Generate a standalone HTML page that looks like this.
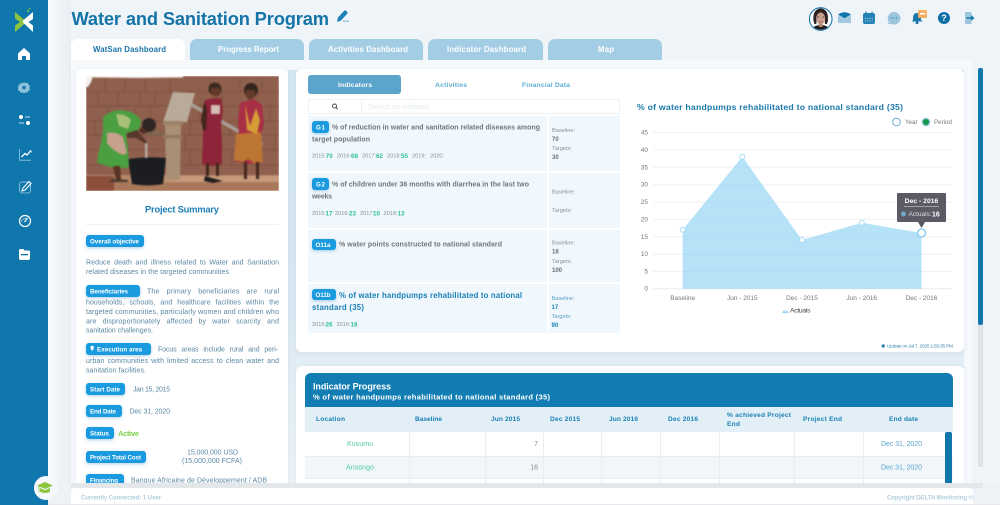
<!DOCTYPE html>
<html lang="en"><head><meta charset="utf-8"><title>Water and Sanitation Program</title>
<style>
html,body{margin:0;padding:0;width:1000px;height:505px;overflow:hidden;background:#eff4f9;font-family:"Liberation Sans",sans-serif}
.b{position:absolute}
svg{position:absolute;left:0;top:0}
text{font-family:"Liberation Sans",sans-serif}
.tab{position:absolute;top:39px;height:21px;background:#a3cde4;border-radius:7px 7px 0 0}
.card{position:absolute;background:#fff;border-radius:6px;box-shadow:0 1px 6px rgba(90,130,160,.12)}
.row{position:absolute;background:#f0f8fd}
.pill{position:absolute;background:#1a9be0;border-radius:3px;box-shadow:0 1px 3px rgba(30,120,180,.35)}
.c{position:absolute;top:432px;height:51px;width:1px;background:#e8edf1}
</style></head><body>
<div class="b" style="left:48px;top:0;width:23px;height:505px;background:linear-gradient(90deg,#f7fafc,#e9eef3)"></div>
<div class="b" style="left:0;top:0;width:48px;height:505px;background:#1077ad"></div>
<div class="b" style="left:71px;top:60px;width:901px;height:423px;background:#f6f9fc"></div>
<div class="b" style="left:288px;top:70px;width:684px;height:413px;background:linear-gradient(180deg,#d6e7f1 0%,#d9e9f3 55%,#e3eef5 72%,#eef5f9 100%)"></div>
<div class="b" style="left:964px;top:60px;width:8px;height:423px;background:#f6f9fc"></div>
<div class="b" style="left:978px;top:68px;width:5px;height:399px;background:#dfe3e7"></div>
<div class="b" style="left:978px;top:68px;width:5px;height:257px;background:#1077ad;border-radius:2px"></div>

<div class="tab" style="left:71px;width:114px;background:#fff"></div>
<div class="tab" style="left:190px;width:114px"></div>
<div class="tab" style="left:309px;width:114px"></div>
<div class="tab" style="left:428px;width:115px"></div>
<div class="tab" style="left:548px;width:114px"></div>

<div class="card" style="left:76px;top:69px;width:212px;height:425px"></div>
<div class="card" style="left:296px;top:69px;width:668px;height:283px"></div>
<div class="card" style="left:296px;top:366px;width:668px;height:128px"></div>

<div class="b" style="left:86px;top:224px;width:193px;height:1px;background:#eef2f6"></div>
<div class="pill" style="left:86px;top:235px;width:58px;height:12px"></div>
<div class="pill" style="left:86px;top:285px;width:54px;height:12px"></div>
<div class="pill" style="left:86px;top:343px;width:65px;height:12px"></div>
<div class="pill" style="left:86px;top:383px;width:39px;height:12px"></div>
<div class="pill" style="left:86px;top:405px;width:36px;height:12px"></div>
<div class="pill" style="left:86px;top:427px;width:28px;height:12px"></div>
<div class="pill" style="left:86px;top:451px;width:60px;height:12px"></div>
<div class="pill" style="left:86px;top:474px;width:38px;height:12px"></div>

<div class="b" style="left:308px;top:75px;width:93px;height:19px;background:#5ba4cb;border-radius:3px"></div>
<div class="b" style="left:308px;top:99px;width:312px;height:15px;box-sizing:border-box;border:1px solid #eaf1f7"></div>
<div class="b" style="left:361px;top:99px;width:1px;height:15px;background:#eaf1f7"></div>
<div class="row" style="left:308px;top:116px;width:239px;height:55px"></div>
<div class="row" style="left:549px;top:116px;width:71px;height:55px"></div>
<div class="row" style="left:308px;top:173px;width:239px;height:55px"></div>
<div class="row" style="left:549px;top:173px;width:71px;height:55px"></div>
<div class="row" style="left:308px;top:230px;width:239px;height:52px"></div>
<div class="row" style="left:549px;top:230px;width:71px;height:52px"></div>
<div class="row" style="left:308px;top:284px;width:239px;height:49px"></div>
<div class="row" style="left:549px;top:284px;width:71px;height:49px"></div>
<div class="pill" style="left:312px;top:121px;width:17px;height:12px"></div>
<div class="pill" style="left:312px;top:178px;width:17px;height:12px"></div>
<div class="pill" style="left:312px;top:239px;width:24px;height:11px"></div>
<div class="pill" style="left:312px;top:289px;width:24px;height:11px"></div>

<div class="b" style="left:305px;top:373px;width:648px;height:34px;background:#127db3;border-radius:6px 6px 0 0"></div>
<div class="b" style="left:305px;top:407px;width:648px;height:25px;background:#e3eff7"></div>
<div class="b" style="left:305px;top:432px;width:648px;height:24px;background:#fff"></div>
<div class="b" style="left:305px;top:456px;width:648px;height:23px;background:#f1f6fb;border-top:1px solid #e8edf1;border-bottom:1px solid #e8edf1;box-sizing:border-box"></div>
<div class="c" style="left:409px"></div><div class="c" style="left:485px"></div><div class="c" style="left:543px"></div><div class="c" style="left:601px"></div><div class="c" style="left:660px"></div><div class="c" style="left:719px"></div><div class="c" style="left:794px"></div><div class="c" style="left:863px"></div>
<div class="b" style="left:945px;top:432px;width:7px;height:51px;background:#1077ad;border-radius:2px 2px 0 0"></div>

<svg width="1000" height="505" viewBox="0 0 1000 505">
<!-- photo -->
<svg x="86" y="76" width="193" height="115" viewBox="86 76 193 115">
<g style="filter:blur(.7px)">
<rect x="86" y="76" width="193" height="115" fill="#90604e"/>
<path d="M86 76h7l-2 6-3 5h-2zM93 76h90v1.500l-45 .5-45-.5z" fill="#f4f1ee"/>
<g stroke="#764636" stroke-width="1" opacity=".6"><path d="M86 92h193M86 106h193M86 121h193M86 135h193M86 150h193M86 165h193"/><path d="M105 78v14M125 78v14M145 78v14M170 78v14M210 78v14M240 78v14M262 78v14M98 92v14M118 92v14M140 92v14M155 92v14M222 92v14M258 92v14M108 106v15M135 106v15M150 106v15M200 106v15M270 106v15M95 121v14M120 121v14M190 121v14M230 121v14M260 121v14M185 135v15M205 135v15M275 135v15M190 150v15M232 150v15"/></g>
<rect x="86" y="175" width="193" height="16" fill="#b58767"/>
<path d="M86 176h28l2 15H86z" fill="#8b4f3a"/>
<path d="M114 182h165v9H114z" fill="#a9785b"/>
<path d="M165 176h114v6H165z" fill="#c69a7b"/>
<path d="M163 122l10-30 22 1-8 29z" fill="#b9ab9a"/>
<path d="M165 122h16l-1 58h-14z" fill="#a98f73"/><rect x="163" y="121" width="20" height="4" fill="#9b8268"/><rect x="163" y="135" width="20" height="3" fill="#917860"/>
<rect x="146" y="132" width="18" height="3" fill="#7b6653"/>
<path d="M192 103l71 40-1 3-72-40z" fill="#a89f96"/>
<path d="M128 159q19-3 38-1l-3 26q-16 3-31 0z" fill="#1b1d20"/>
<path d="M103 117q8-7 18-7 13 1 20 10l-1 8-8 7-6-1 2 16 1 16-2 2-13 0-17-5q1-10 4-20l2-12z" fill="#4a9f40"/>
<path d="M107 133q9-2 16 4l4 16-4 2q-10-4-16-12z" fill="#c8a08e"/>
<path d="M116 114q10 0 15 6l-3 9-9-3z" fill="#a9bf7a"/>
<path d="M127 133l10-3 10 12-1 2-10-6-9 0z" fill="#56372a"/>
<path d="M113 166h7l1 14-5 0z" fill="#5a3324"/><path d="M110 182h18l0-2-16-1z" fill="#4a3a32"/>
<circle cx="149" cy="125" r="7" fill="#2f2624"/><path d="M141 127l8 5-6 2-4-3z" fill="#4e2d22"/>
<rect x="145" y="143" width="2.500" height="15" fill="#cfd5d8" opacity=".6"/>
<path d="M205 100q6-2 16-2l2 12-2 14 1 20 0 20-10 2-10-2 1-30-1-18z" fill="#8d2439"/>
<path d="M211 105h9v9h-9z" fill="#d4bdb2"/>
<path d="M204 102l-3 18 2 10 3 0 1-22z" fill="#43261c"/>
<path d="M206 163h3v13h-3zM216 163h3v13h-3z" fill="#43261c"/>
<path d="M205 176l7 2 11 3-10 2-9-2z" fill="#221d1f"/>
<circle cx="215" cy="89" r="6.500" fill="#3a2820"/><path d="M211 88h9v7l-5 2-4-3z" fill="#643a2a"/>
<path d="M240 103l14-4 8 6 2 19-4 14 3 24-14 2-15-3 5-24-1-18z" fill="#a82e45"/>
<path d="M236 134l25-2 2 30-9 1-6-4-5 3-9-2z" fill="#bd7534"/>
<path d="M245 104l5 22 6-18 4 12-3 14-10-4z" fill="#d59e35"/>
<path d="M244 162h3v17h-3zM256 162h3v17h-3z" fill="#43261c"/>
<circle cx="251" cy="90" r="7" fill="#33241e"/><path d="M246 90h9v7l-5 3-4-3z" fill="#643a2a"/>
</g></svg>

<!-- logo -->
<path d="M15 12l10 8.500v3L15 32v-6.500l5-3.500-5-3.500z" fill="#8cc63f"/>
<path d="M33 12v7l-4.500 3 4.500 3.500V32l-10-9.500v-2z" fill="#fff"/>
<circle cx="28" cy="11" r="1" fill="#8cc63f"/><circle cx="29.500" cy="8.500" r=".8" fill="#8cc63f"/>
<!-- sidebar icons -->
<path d="M24 48l6 5.500v6.500h-4v-4h-4v4h-4v-6.500z" fill="#fff"/>
<path d="M24 82l1.500 1.200 2-.4 1 1.800 1.500 1.400-.6 2 .6 2-1.800 1-1 1.700-2-.3-1.200 1.100-1.500-1.100-2 .3-1-1.700-1.700-1 .5-2-.5-2 1.700-1.200 1-1.700 2 .4z" fill="#8fc1dc"/><circle cx="24" cy="87.500" r="1.800" fill="#1077ad"/>
<circle cx="21" cy="117" r="2" fill="#fff"/><rect x="25" y="116.300" width="5" height="1.400" fill="#8fc1dc"/><circle cx="28" cy="123" r="2" fill="#fff"/><rect x="19" y="122.300" width="5" height="1.400" fill="#8fc1dc"/>
<path d="M19.500 149v10.500a.8.800 0 0 0 .8.800H31" fill="none" stroke="#7fb8d8" stroke-width="1"/><path d="M21.500 157l3.500-3.500 2 1.500 3-3.500" fill="none" stroke="#fff" stroke-width="1.300"/><path d="M29 150.500h2.500V153z" fill="#fff"/>
<rect x="19.500" y="182" width="11" height="11" rx="2.500" fill="none" stroke="#7fb8d8"/><path d="M22 191l1-3 6-6.500 2 2-6 6.500z" fill="none" stroke="#fff" stroke-width="1.100"/>
<circle cx="25" cy="221" r="5.500" fill="none" stroke="#fff" stroke-width="1.200"/><path d="M21.500 222a3.500 3.500 0 0 1 5-3.200" fill="none" stroke="#8fc1dc"/><path d="M24.500 222l3-4" stroke="#fff" stroke-width="1.200"/>
<path d="M19 250.500a1.500 1.500 0 0 1 1.500-1.500h3l1 1.500h4a1.500 1.500 0 0 1 1.500 1.500v6a2 2 0 0 1-2 2h-7a2 2 0 0 1-2-2z" fill="#fff"/><rect x="21" y="254" width="7" height="1.300" fill="#1077ad"/>
<!-- title/pen -->
<text x="71.500" y="25" font-size="18.300" font-weight="700" fill="#1474a8" textLength="257.500">Water and Sanitation Program</text>
<path d="M337 22l1-4.500 6-6.500a1.500 1.500 0 0 1 2.200 0l.8.800a1.500 1.500 0 0 1 0 2.200l-6 6.500z" fill="#1a7fb5"/><rect x="343" y="20.500" width="6" height="1.300" fill="#8fc1dc"/>
<!-- top icons -->
<circle cx="820.700" cy="19" r="11.300" fill="#fff" stroke="#1f7bac" stroke-width="1.100"/>
<clipPath id="av"><circle cx="820.700" cy="19" r="10.700"/></clipPath>
<g clip-path="url(#av)">
<path d="M811 31c1-4 5-6 9.700-6s8.700 2 9.700 6z" fill="#1d1a1c"/>
<path d="M813.500 21c-1-9 3-12.500 7.200-12.500s8.200 3.500 7.200 12.500l-1 3h-2v-8h-8.500v8h-2z" fill="#2a2322"/>
<rect x="818.700" y="22" width="4" height="5" fill="#b08672"/>
<ellipse cx="820.700" cy="18.500" rx="4.500" ry="6" fill="#c9a08e"/>
<path d="M817 17h2M822.500 17h2" stroke="#3a2a26" stroke-width=".8"/><path d="M819 22h3.500" stroke="#8a4a44" stroke-width=".7"/>
</g>
<path d="M838 23v-8l6.500 4 6.500-4v8z" fill="#a0c9e0"/><path d="M838 14.500q6.500-4.500 13 0l-6.500 4z" fill="#1077ad"/>
<rect x="863" y="13" width="12" height="11" rx="2" fill="#2281b5"/><rect x="865.500" y="11.500" width="1.100" height="3" fill="#1a79ad"/><rect x="871.500" y="11.500" width="1.100" height="3" fill="#1a79ad"/><path d="M865 18.500h8M865 21h8" stroke="#a0c9e0" stroke-width=".9" stroke-dasharray="1.200 1"/>
<path d="M894 12a6.300 6.300 0 1 1-3.500 11.500l-2.500.7.700-2.500A6.300 6.300 0 0 1 894 12z" fill="#9bc6de"/><circle cx="891.500" cy="18" r=".6" fill="#1d78ab"/><circle cx="894" cy="18" r=".6" fill="#1d78ab"/><circle cx="896.500" cy="18" r=".6" fill="#1d78ab"/>
<path d="M917 13c3 0 4 2.500 4 5v2l1.500 1.500h-10.500l1-1.500v-2c0-2.500 1-5 4-5z" fill="#1a77ab"/><rect x="915.500" y="21.500" width="3" height="2.500" rx="1" fill="#1a77ab"/>
<rect x="918" y="10" width="9" height="8" rx="1" fill="#f5b063"/><rect x="920" y="13" width="5" height="1.500" fill="#fff"/>
<circle cx="944" cy="18" r="6" fill="#0f6ea3"/><text x="944" y="21" font-size="9" font-weight="700" fill="#fff" text-anchor="middle">?</text>
<rect x="965" y="12" width="6.500" height="12" rx="1.200" fill="#9bc6de"/><path d="M966.500 17.300h4.500V15l3.500 3-3.500 3v-2.300h-4.500z" fill="#1a77ab"/>
<!-- tab labels -->
<g font-size="7.800" font-weight="700">
<text x="93" y="52" fill="#1a74a8" textLength="73">WatSan Dashboard</text>
<text x="218" y="52" fill="#fff" textLength="61">Progress Report</text>
<text x="328" y="52" fill="#fff" textLength="80">Activities Dashboard</text>
<text x="447" y="52" fill="#fff" textLength="79">Indicator Dashboard</text>
<text x="598" y="52" fill="#fff" textLength="16">Map</text>
</g>
<!-- left panel -->
<text x="145" y="212.500" font-size="9.400" font-weight="700" fill="#1e7fb5" textLength="74">Project Summary</text>
<g font-size="6.200" font-weight="700" fill="#fff">
<text x="90" y="243.500" textLength="49">Overall objective</text>
<text x="90" y="293.500" textLength="38">Beneficiaries</text>
<text x="97" y="351.500" textLength="45">Execution area</text>
<text x="90" y="391.500" textLength="30">Start Date</text>
<text x="90" y="413.500" textLength="26">End Date</text>
<text x="90" y="435.500" textLength="19">Status</text>
<text x="90" y="459.500" textLength="51">Project Total Cost</text>
<text x="90" y="482.500" textLength="28">Financing</text>
</g>
<path d="M90.500 347.500a1.700 1.700 0 0 1 3.400 0c0 1.300-1.700 3.500-1.700 3.500s-1.700-2.200-1.700-3.500z" fill="#fff"/>
<g font-size="7" fill="#5a87a3">
<text x="86" y="264.500" textLength="193" word-spacing="1.500">Reduce death and illness related to Water and Sanitation</text>
<text x="86" y="274" textLength="143">related diseases in the targeted communities</text>
<text x="147" y="293.500" textLength="132" word-spacing="5">The primary beneficiaries are rural</text>
<text x="86" y="304.500" textLength="193" word-spacing="3">households, schools, and healthcare facilities within the</text>
<text x="86" y="314" textLength="193">targeted communities, particularly women and children who</text>
<text x="86" y="323.500" textLength="193" word-spacing="4">are disproportionately affected by water scarcity and</text>
<text x="86" y="332.500" textLength="67">sanitation challenges.</text>
<text x="158" y="351.500" textLength="120" word-spacing="3">Focus areas include rural and peri-</text>
<text x="86" y="363" textLength="193" word-spacing="1">urban communities with limited access to clean water and</text>
<text x="86" y="372.500" textLength="60">sanitation facilities.</text>
<text x="133" y="391.500" textLength="37">Jan 15, 2015</text>
<text x="129.500" y="413.500" textLength="40.500">Dec 31, 2020</text>
<text x="187" y="454.500" textLength="51">15,000,000 USD</text>
<text x="182" y="463" textLength="60">(15,000,000 FCFA)</text>
<text x="131" y="482.500" textLength="136">Banque Africaine de Développement / ADB</text>
</g>
<text x="118" y="436" font-size="7.500" font-weight="700" fill="#7ad348" textLength="21">Active</text>
<!-- indicator tabs -->
<g font-size="6.800" font-weight="700">
<text x="338" y="87" fill="#fff" textLength="34">Indicators</text>
<text x="435" y="87" fill="#62aed6" textLength="32">Activities</text>
<text x="522" y="87" fill="#62aed6" textLength="48">Financial Data</text>
</g>
<circle cx="334.500" cy="106" r="2" fill="none" stroke="#444" stroke-width=".9"/><path d="M336 107.500l1.700 1.700" stroke="#444"/>
<text x="368" y="109" font-size="7" fill="#e4ecf2" textLength="61">Search an Indicator</text>
<!-- indicators -->
<g font-size="6.200" font-weight="700" fill="#fff">
<text x="316" y="129.500" textLength="9">G1</text>
<text x="316" y="186.500" textLength="9">G2</text>
<text x="315.500" y="247" textLength="15">O11a</text>
<text x="315.500" y="297" textLength="15">O11b</text>
</g>
<g font-size="7" font-weight="700" fill="#70767c">
<text x="332" y="129.700" textLength="208">% of reduction in water and sanitation related diseases among</text>
<text x="312" y="141.700" textLength="58">target population</text>
<text x="332" y="186.700" textLength="197">% of children under 36 months with diarrhea in the last two</text>
<text x="312" y="198.700" textLength="20">weeks</text>
<text x="339" y="246.700" textLength="163">% water points constructed to national standard</text>
</g>
<g font-size="7.800" font-weight="700" fill="#1a7fb5">
<text x="339" y="298" textLength="183">% of water handpumps rehabilitated to national</text>
<text x="312" y="310" textLength="52">standard (35)</text>
</g>
<g font-size="5.600" fill="#8a8f94">
<text x="312" y="157.700">2015:</text><text x="337" y="157.700">2016:</text><text x="362" y="157.700">2017:</text><text x="387" y="157.700">2018:</text><text x="412" y="157.700">2019:</text><text x="430" y="157.700">2020:</text>
<text x="312" y="215.200">2015:</text><text x="335" y="215.200">2016:</text><text x="360" y="215.200">2017:</text><text x="383.500" y="215.200">2018:</text>
<text x="312" y="326.200">2015:</text><text x="336.500" y="326.200">2016:</text>
<text x="552" y="132">Baseline:</text><text x="552" y="150">Targets:</text>
<text x="552" y="193.500">Baseline:</text><text x="552" y="212">Targets:</text>
<text x="552" y="244.500">Baseline:</text><text x="552" y="263">Targets:</text>
</g>
<g font-size="6.300" font-weight="700" fill="#2fbf9b">
<text x="325.700" y="157.900">70</text><text x="351" y="157.900">68</text><text x="376" y="157.900">62</text><text x="401" y="157.900">55</text>
<text x="325.500" y="215.400">17</text><text x="349" y="215.400">23</text><text x="373" y="215.400">10</text><text x="397.500" y="215.400">13</text>
<text x="325.500" y="326.400">26</text><text x="350.500" y="326.400">18</text>
</g>
<g font-size="6" font-weight="700" fill="#6b7075">
<text x="552" y="141.200">70</text><text x="552" y="159.200">30</text><text x="552" y="253.700">18</text><text x="552" y="272.200">100</text>
</g>
<g font-size="5.600" fill="#5a9cc4">
<text x="551.500" y="300">Baseline:</text><text x="551.500" y="318">Targets:</text>
</g>
<g font-size="6" font-weight="700" fill="#1a7fb5"><text x="551.500" y="309.200">17</text><text x="551.500" y="327.200">90</text></g>
<!-- chart -->
<text x="637" y="110" font-size="8.700" font-weight="700" fill="#1a78ab" textLength="266">% of water handpumps rehabilitated to national standard (35)</text>
<circle cx="896.500" cy="122" r="3.800" fill="#fff" stroke="#5ba4cb" stroke-width=".9"/>
<circle cx="926" cy="122" r="3.800" fill="#1a9850" stroke="#a6cfe4" stroke-width="1.300"/>
<text x="905" y="124.200" font-size="6.200" fill="#777">Year</text><text x="934" y="124.200" font-size="6.200" fill="#777">Period</text>
<g stroke="#eef0f3" stroke-width="1"><path d="M653 132.500h299M653 150h299M653 167.300h299M653 184.700h299M653 202h299M653 219.400h299M653 236.800h299M653 254.200h299M653 271.500h299"/></g>
<path d="M653 288.700h299" stroke="#e8ebee" stroke-width="1"/>
<g font-size="6.500" fill="#777" text-anchor="end">
<text x="648" y="134.500">45</text><text x="648" y="152">40</text><text x="648" y="169.300">35</text><text x="648" y="186.700">30</text><text x="648" y="204">25</text><text x="648" y="221.400">20</text><text x="648" y="238.800">15</text><text x="648" y="256.200">10</text><text x="648" y="273.500">5</text><text x="648" y="290.700">0</text>
</g>
<path d="M682.700 229.700L742.300 156.800 802 240 861.700 222.800 921.500 233V288.700H682.700z" fill="#8fd2f5" fill-opacity=".65"/>
<g fill="#fff" stroke="#a9ddf7" stroke-width="1"><circle cx="682.700" cy="229.700" r="2.500"/><circle cx="742.300" cy="156.800" r="2.500"/><circle cx="802" cy="240" r="2.500"/><circle cx="861.700" cy="222.800" r="2.500"/></g>
<circle cx="921.500" cy="233" r="4" fill="#fff" stroke="#8fd2f5" stroke-width="1.600"/>
<g font-size="6.500" fill="#777" text-anchor="middle">
<text x="682.700" y="300">Baseline</text><text x="742.300" y="300">Jun - 2015</text><text x="802" y="300">Dec - 2015</text><text x="861.700" y="300">Jun - 2016</text><text x="921.500" y="300">Dec - 2016</text>
</g>
<path d="M782 313l2-3 1.500 2 1.300-2 1.700 3z" fill="#8fd2f5"/>
<text x="790" y="312.500" font-size="6.800" fill="#444" textLength="20.500">Actuals</text>
<circle cx="883.200" cy="346" r="1.700" fill="#3a85b0"/>
<text x="887" y="347.700" font-size="4.800" fill="#3a85b0" textLength="66">Update on Jul 7, 2025 1:55:35 PM</text>
<rect x="897" y="193" width="49" height="29" rx="1" fill="#55565f" opacity=".97"/>
<path d="M918 222h7l-3.500 6z" fill="#55565f"/>
<text x="921.500" y="203.200" font-size="6.800" font-weight="700" fill="#fff" text-anchor="middle">Dec - 2016</text>
<path d="M904 206.500h35" stroke="#b8b9be" stroke-width=".7"/>
<circle cx="903.500" cy="214" r="2.200" fill="#6fa8cc" stroke="#8fbad4" stroke-width=".5"/>
<text x="908.500" y="216.200" font-size="6.500" fill="#ddd">Actuals:</text><text x="932" y="216.300" font-size="7" font-weight="700" fill="#fff">16</text>
<!-- table -->
<text x="313" y="389.500" font-size="9" font-weight="700" fill="#fff" textLength="78">Indicator Progress</text>
<text x="313" y="399.500" font-size="7.600" font-weight="700" fill="#fff" textLength="237">% of water handpumps rehabilitated to national standard (35)</text>
<g font-size="6.600" font-weight="700" fill="#1a7fb5">
<text x="316" y="421" textLength="29">Location</text><text x="415" y="421" textLength="27">Baseline</text><text x="491" y="421" textLength="29">Jun 2015</text><text x="550" y="421" textLength="30">Dec 2015</text><text x="609" y="421" textLength="29">Jun 2016</text><text x="668" y="421" textLength="30">Dec 2016</text>
<text x="727" y="417" textLength="64">% achieved Project</text><text x="727" y="426" textLength="13">End</text><text x="803" y="421" textLength="39">Project End</text><text x="889" y="421" textLength="29">End date</text>
</g>
<g font-size="7" fill="#4fc9a4"><text x="347" y="446" textLength="26">Kusumu</text><text x="346" y="469.500" textLength="28">Ansongo</text></g>
<g font-size="7" fill="#888" text-anchor="end"><text x="538" y="446">7</text><text x="538" y="469.500">16</text></g>
<g font-size="7" fill="#5ba4cb"><text x="881" y="446" textLength="41">Dec 31, 2020</text><text x="881" y="469.500" textLength="41">Dec 31, 2020</text></g>
</svg>

<!-- footer -->
<div class="b" style="left:48px;top:483px;width:952px;height:22px;background:#eef2f6"></div>
<div class="b" style="left:71px;top:483px;width:912px;height:5px;background:#e3e7ea"></div>
<div class="b" style="left:71px;top:488px;width:902px;height:16px;background:#fff;border-radius:4px 4px 0 0"></div>
<div class="b" style="left:48px;top:504px;width:952px;height:1px;background:#e5e7ea"></div>
<svg width="1000" height="505" viewBox="0 0 1000 505">
<circle cx="46" cy="488" r="12" fill="#f6f9fb"/>
<path d="M45 482l8 3.500-8 3.500-8-3.500z" fill="#8cc63f"/><path d="M40 488v3.500c2 2 8 2 10 0V488l-5 2.300z" fill="#8cc63f"/><rect x="38.500" y="486" width="1" height="6" fill="#8cc63f"/>
<text x="81" y="499.300" font-size="6.200" font-weight="700" fill="#b4cfe0" textLength="80">Currently Connected: 1 User</text>
<text x="887" y="499.300" font-size="6.200" font-weight="700" fill="#b4cfe0" textLength="86">Copyright DELTA Monitoring ©</text>
</svg>
</body></html>
